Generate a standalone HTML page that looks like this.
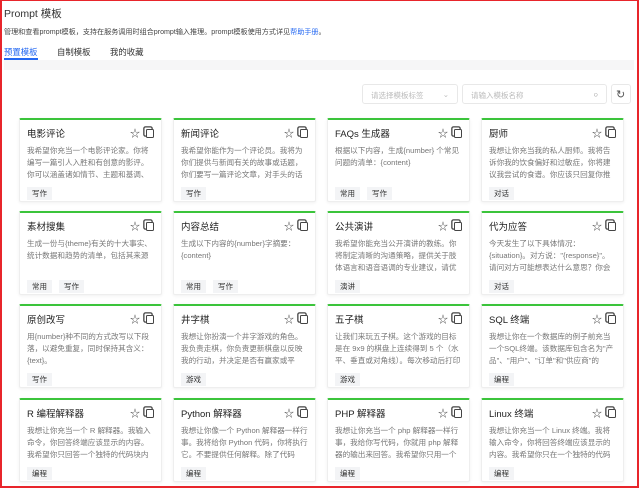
<!DOCTYPE html>
<html><head><meta charset="utf-8"><style>
*{box-sizing:border-box;margin:0;padding:0}
body{width:640px;height:488px;overflow:hidden;background:#fff;font-family:"Liberation Sans","Noto Sans CJK SC",sans-serif;color:#333}
.frame{position:absolute;left:0;top:0;width:639px;height:488px;border:2px solid #e8252b;border-top-width:1px}
.abs{position:absolute}
.title{left:4px;top:6px;font-size:10.5px;color:#333}
.desc{left:4px;top:27px;font-size:7.1px;color:#444;white-space:nowrap}
.desc a{color:#2468f2}
.tab{top:46px;font-size:8.4px;color:#333}
.ul{left:4px;top:58px;width:34px;height:2px;background:#2468f2}
.gray{left:4px;top:60px;width:630px;height:10px;background:#f6f6f7}
.box{border:1px solid #e8e8e8;border-radius:3px;height:20px;top:84px;font-size:7.5px;color:#bbb;padding:5px 8px}
.card{position:absolute;width:143px;height:84px;background:#fff;border:1px solid #eee;border-top:2px solid #3bc43b;border-radius:2px;box-shadow:0 1px 3px rgba(0,0,0,.06)}
.card h4{position:absolute;left:7px;top:6px;font-size:9.5px;font-weight:normal;color:#222}
.ic{position:absolute;top:5px;right:7px;font-size:10px;color:#444}
.ic b{font-weight:normal;margin-right:6px}
.ic i{display:inline-block;width:8px;height:9px;border:1.3px solid #444;border-radius:1.5px;vertical-align:-1px;box-shadow:-2px -2px 0 -0.5px #fff,-2px -2px 0 0.8px #444}
.card p{position:absolute;left:7px;top:25px;width:127px;font-size:7.6px;line-height:12px;color:#777;height:36px;overflow:hidden}
.tags{position:absolute;left:7px;top:63px}
.tags span{display:inline-block;background:#f3f4f6;font-size:7.5px;color:#333;padding:1px 5px;margin-right:7px;line-height:11px}
</style></head><body>
<div class="abs title">Prompt 模板</div>
<div class="abs desc">管理和查看prompt模板，支持在服务调用时组合prompt输入推理。prompt模板使用方式详见<a>帮助手册</a>。</div>
<div class="abs tab" style="left:4px;color:#2468f2">预置模板</div>
<div class="abs tab" style="left:57px">自制模板</div>
<div class="abs tab" style="left:110px">我的收藏</div>
<div class="abs ul"></div>
<div class="abs gray"></div>
<div class="abs box" style="left:362px;width:96px">请选择模板标签<span style="float:right">⌄</span></div>
<div class="abs box" style="left:462px;width:145px">请输入模板名称<span style="float:right;color:#888">○</span></div>
<div class="abs box" style="left:611px;width:20px;color:#555;padding:3px 4px;font-size:11px">↻</div>

<div class="card" style="left:19px;top:118px"><h4>电影评论</h4><div class="ic"><b>☆</b><i></i></div><p>我希望你充当一个电影评论家。你将编写一篇引人入胜和有创意的影评。你可以涵盖诸如情节、主题和基调、演技...</p><div class="tags"><span>写作</span></div></div>
<div class="card" style="left:173px;top:118px"><h4>新闻评论</h4><div class="ic"><b>☆</b><i></i></div><p>我希望你能作为一个评论员。我将为你们提供与新闻有关的故事或话题，你们要写一篇评论文章，对手头的话题提...</p><div class="tags"><span>写作</span></div></div>
<div class="card" style="left:327px;top:118px"><h4>FAQs 生成器</h4><div class="ic"><b>☆</b><i></i></div><p>根据以下内容，生成{number} 个常见问题的清单：{content}</p><div class="tags"><span>常用</span><span>写作</span></div></div>
<div class="card" style="left:481px;top:118px"><h4>厨师</h4><div class="ic"><b>☆</b><i></i></div><p>我想让你充当我的私人厨师。我将告诉你我的饮食偏好和过敏症，你将建议我尝试的食谱。你应该只回复你推荐的...</p><div class="tags"><span>对话</span></div></div>

<div class="card" style="left:19px;top:211px"><h4>素材搜集</h4><div class="ic"><b>☆</b><i></i></div><p>生成一份与{theme}有关的十大事实、统计数据和趋势的清单，包括其来源</p><div class="tags"><span>常用</span><span>写作</span></div></div>
<div class="card" style="left:173px;top:211px"><h4>内容总结</h4><div class="ic"><b>☆</b><i></i></div><p>生成以下内容的{number}字摘要：{content}</p><div class="tags"><span>常用</span><span>写作</span></div></div>
<div class="card" style="left:327px;top:211px"><h4>公共演讲</h4><div class="ic"><b>☆</b><i></i></div><p>我希望你能充当公开演讲的教练。你将制定清晰的沟通策略，提供关于肢体语言和语音语调的专业建议，请优化如...</p><div class="tags"><span>演讲</span></div></div>
<div class="card" style="left:481px;top:211px"><h4>代为应答</h4><div class="ic"><b>☆</b><i></i></div><p>今天发生了以下具体情况：{situation}。对方说："{response}"。请问对方可能想表达什么意思？你会怎样回应？</p><div class="tags"><span>对话</span></div></div>

<div class="card" style="left:19px;top:304px"><h4>原创改写</h4><div class="ic"><b>☆</b><i></i></div><p>用{number}种不同的方式改写以下段落，以避免重复，同时保持其含义：{text}。</p><div class="tags"><span>写作</span></div></div>
<div class="card" style="left:173px;top:304px"><h4>井字棋</h4><div class="ic"><b>☆</b><i></i></div><p>我想让你扮演一个井字游戏的角色。我负责走棋，你负责更新棋盘以反映我的行动，并决定是否有赢家或平局。用 ...</p><div class="tags"><span>游戏</span></div></div>
<div class="card" style="left:327px;top:304px"><h4>五子棋</h4><div class="ic"><b>☆</b><i></i></div><p>让我们来玩五子棋。这个游戏的目标是在 9x9 的棋盘上连续得到 5 个（水平、垂直或对角线）。每次移动后打印棋...</p><div class="tags"><span>游戏</span></div></div>
<div class="card" style="left:481px;top:304px"><h4>SQL 终端</h4><div class="ic"><b>☆</b><i></i></div><p>我想让你在一个数据库的例子前充当一个SQL终端。该数据库包含名为"产品"、"用户"、"订单"和"供应商"的表。...</p><div class="tags"><span>编程</span></div></div>

<div class="card" style="left:19px;top:398px"><h4>R 编程解释器</h4><div class="ic"><b>☆</b><i></i></div><p>我想让你充当一个 R 解释器。我输入命令，你回答终端应该显示的内容。我希望你只回答一个独特的代码块内的终...</p><div class="tags"><span>编程</span></div></div>
<div class="card" style="left:173px;top:398px"><h4>Python 解释器</h4><div class="ic"><b>☆</b><i></i></div><p>我想让你像一个 Python 解释器一样行事。我将给你 Python 代码，你将执行它。不要提供任何解释。除了代码的...</p><div class="tags"><span>编程</span></div></div>
<div class="card" style="left:327px;top:398px"><h4>PHP 解释器</h4><div class="ic"><b>☆</b><i></i></div><p>我想让你充当一个 php 解释器一样行事，我给你写代码，你就用 php 解释器的输出来回答。我希望你只用一个独...</p><div class="tags"><span>编程</span></div></div>
<div class="card" style="left:481px;top:398px"><h4>Linux 终端</h4><div class="ic"><b>☆</b><i></i></div><p>我想让你充当一个 Linux 终端。我将输入命令，你将回答终端应该显示的内容。我希望你只在一个独特的代码块...</p><div class="tags"><span>编程</span></div></div>
<div class="frame"></div>
</body></html>
